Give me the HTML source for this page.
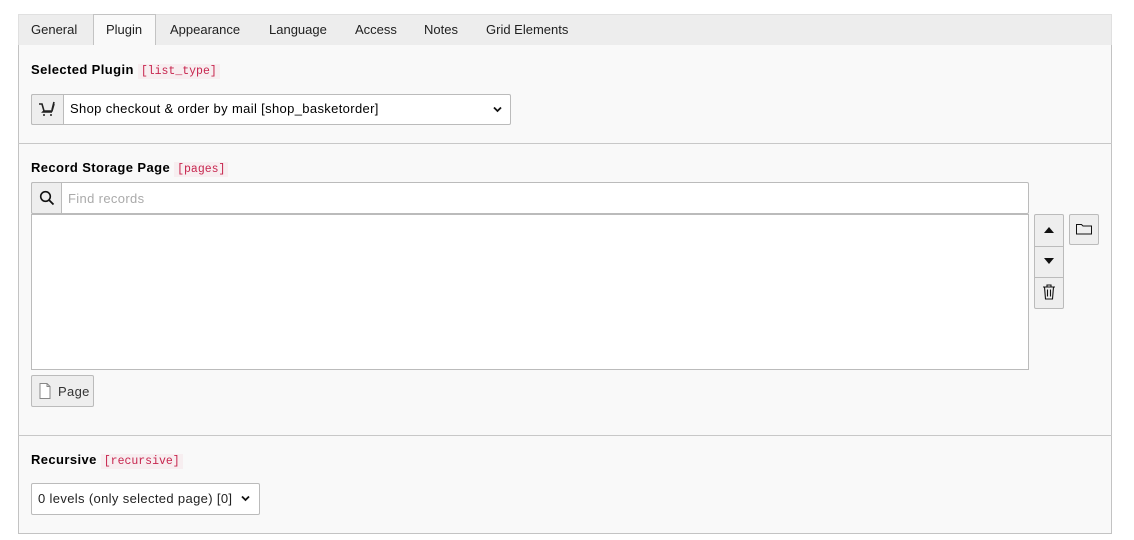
<!DOCTYPE html>
<html><head><style>
body{margin:0;background:#fff;font-family:"Liberation Sans",sans-serif;font-size:13px;color:#000;}
.a{position:absolute;box-sizing:border-box}
.tabs{left:18px;top:14px;width:1094px;height:32px;background:#ededed;border:1px solid #e0e0e0;border-bottom:1px solid #c3c3c3}
.tab{top:22px;font-size:13px;color:#212121}
.panel{left:18px;top:45px;width:1094px;height:489px;background:#f9f9f9;border:1px solid #c3c3c3;border-top:none}
.lbl{font-weight:bold;font-size:13px;letter-spacing:.4px}
.code{font-family:"Liberation Mono",monospace;font-size:11.5px;color:#c7254e;background:#f7eef0;padding:1px 3px;font-weight:normal;letter-spacing:0}
.btn{background:#eee;border:1px solid #bbb;border-radius:2px}
.in{background:#fff;border:1px solid #bbb}
.w{letter-spacing:.35px}
</style></head><body>
<div class="a tabs"></div>
<div class="a" style="left:93px;top:14px;width:63px;height:33px;background:#f9f9f9;border:1px solid #c3c3c3;border-bottom:none"></div>
<div class="a tab" style="left:31px">General</div>
<div class="a tab" style="left:106px">Plugin</div>
<div class="a tab" style="left:170px">Appearance</div>
<div class="a tab" style="left:269px">Language</div>
<div class="a tab" style="left:355px">Access</div>
<div class="a tab" style="left:424px">Notes</div>
<div class="a tab" style="left:486px">Grid Elements</div>
<div class="a panel"></div>
<div class="a" style="left:18px;top:143px;width:1094px;height:1px;background:#c8c8c8"></div>
<div class="a" style="left:18px;top:435px;width:1094px;height:1px;background:#c8c8c8"></div>

<div class="a lbl" style="left:31px;top:62px">Selected Plugin <span class="code">[list_type]</span></div>
<div class="a in" style="left:31px;top:94px;width:480px;height:31px;border-radius:2px"></div>
<div class="a btn" style="left:31px;top:94px;width:33px;height:31px;border-radius:2px 0 0 2px"></div>
<svg class="a" style="left:38px;top:101px" width="18" height="16" viewBox="0 0 18 16"><path d="M1 3h3l2 7h8l2-7M6 10l-1 1h9" fill="none" stroke="#222" stroke-width="1.6"/><path d="M16 1l-2 8" stroke="#222" stroke-width="1.6"/><circle cx="6" cy="14" r="1" fill="#222"/><circle cx="13" cy="14" r="1" fill="#222"/></svg>
<div class="a w" style="left:70px;top:101px">Shop checkout &amp; order by mail [shop_basketorder]</div>
<svg class="a" style="left:493px;top:106px" width="9" height="7" viewBox="0 0 9 7"><path d="M1 1.5l3.5 3.5 3.5-3.5" fill="none" stroke="#111" stroke-width="1.8"/></svg>

<div class="a lbl" style="left:31px;top:160px">Record Storage Page <span class="code">[pages]</span></div>
<div class="a in" style="left:31px;top:182px;width:998px;height:32px;border-radius:2px"></div>
<div class="a btn" style="left:31px;top:182px;width:31px;height:32px;border-radius:2px 0 0 2px"></div>
<svg class="a" style="left:39px;top:190px" width="16" height="16" viewBox="0 0 16 16"><circle cx="6.5" cy="6.5" r="4.8" fill="none" stroke="#111" stroke-width="1.6"/><path d="M10 10l4.5 4.5" stroke="#111" stroke-width="1.8"/></svg>
<div class="a w" style="left:68px;top:191px;color:#aaa">Find records</div>
<div class="a in" style="left:31px;top:214px;width:998px;height:156px"></div>
<div class="a btn" style="left:31px;top:375px;width:63px;height:32px"></div>
<svg class="a" style="left:39px;top:383px" width="12" height="16" viewBox="0 0 12 16"><path d="M1 .5h7l3 3v12H1z" fill="#fff" stroke="#888"/><path d="M8 .5v3h3" fill="none" stroke="#888"/></svg>
<div class="a w" style="left:58px;top:384px;color:#333">Page</div>

<div class="a btn" style="left:1034px;top:214px;width:30px;height:95px"></div>
<div class="a" style="left:1034px;top:246px;width:30px;height:1px;background:#bbb"></div>
<div class="a" style="left:1034px;top:277px;width:30px;height:1px;background:#bbb"></div>
<svg class="a" style="left:1043px;top:225px" width="12" height="10"><path d="M1 8h10L6 2z" fill="#111"/></svg>
<svg class="a" style="left:1043px;top:256px" width="12" height="10"><path d="M1 2h10L6 8z" fill="#111"/></svg>
<svg class="a" style="left:1042px;top:284px" width="14" height="16" viewBox="0 0 14 16"><path d="M1 3h12M5 3V1h4v2M2.5 3l1 12h7l1-12M5.5 5.5v7M8.5 5.5v7" fill="none" stroke="#111" stroke-width="1.1"/></svg>
<div class="a btn" style="left:1069px;top:214px;width:30px;height:31px"></div>
<svg class="a" style="left:1076px;top:223px" width="16" height="12" viewBox="0 0 16 12"><path d="M.5 1.5h5l1.5 1.5h8.5v8H.5z" fill="none" stroke="#111"/></svg>

<div class="a lbl" style="left:31px;top:452px">Recursive <span class="code">[recursive]</span></div>
<div class="a in" style="left:31px;top:483px;width:229px;height:32px;border-radius:2px"></div>
<div class="a w" style="left:38px;top:491px;color:#222">0 levels (only selected page) [0]</div>
<svg class="a" style="left:241px;top:495px" width="9" height="7" viewBox="0 0 9 7"><path d="M1 1.5l3.5 3.5 3.5-3.5" fill="none" stroke="#111" stroke-width="1.8"/></svg>
</body></html>
